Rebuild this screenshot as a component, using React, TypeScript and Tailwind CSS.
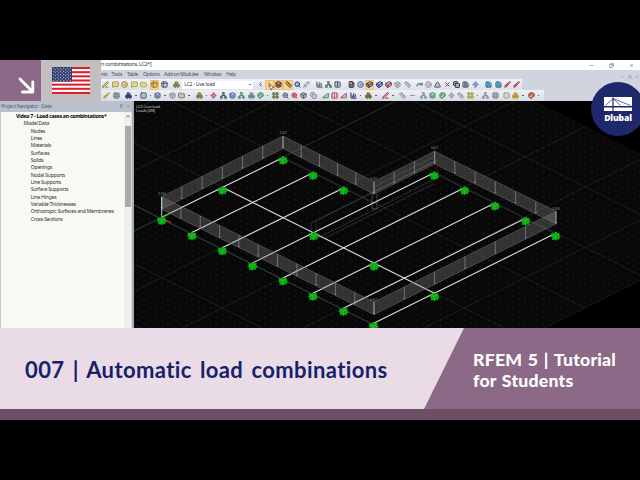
import {
  Box, Boxes, Brush, ChartColumn, ChevronLeft, ChevronRight, CircleDot, Columns2, Copy,
  Cuboid, FileSpreadsheet, Folder, FlipHorizontal, Grid3x3, Layers, LayoutGrid, type LucideIcon,
  MessageSquare, Minus, MousePointer2, Network, Palette, PenLine, Pin, Redo, Ruler, Save, Search,
  Square, Table2, Triangle, TriangleRight, Unplug, X, Zap, ZoomIn, ZoomOut,
} from "lucide-react";

type Tool = { icon: LucideIcon; color: string; on?: boolean; drop?: boolean };
type Group = { gap: string; tools: Tool[] };

const NAVY = "#303a70";
const GRAY = "#8e93a0";
const SLATE = "#555d72";
const GOLD = "#b89a20";
const GREEN = "#3f9668";
const RED = "#bd3440";
const BLUE = "#2874a8";
const BLACK = "#30313c";

const t = (icon: LucideIcon, color: string, extra: Partial<Tool> = {}): Tool => ({ icon, color, ...extra });

const mainStart: Group[] = [
  { gap: "ml-[0.3px]", tools: [t(PenLine, "#888b20"), t(MessageSquare, GOLD), t(CircleDot, "#b4842c"), t(MessageSquare, "#b6a521"), t(Folder, "#c2aa28")] },
  { gap: "ml-[2px]", tools: [t(Table2, "#a77b32", { on: true }), t(Table2, SLATE)] },
  { gap: "ml-[3.3px]", tools: [t(Boxes, "#77833c")] },
];

const mainRest: Group[] = [
  { gap: "ml-[2px]", tools: [t(ChevronLeft, "#4569b0"), t(ChevronRight, "#936c26", { on: true }), t(Layers, BLACK, { on: true }), t(Ruler, "#755522", { on: true }), t(Search, NAVY), t(Unplug, GRAY)] },
  { gap: "ml-[3px]", tools: [t(ChartColumn, SLATE), t(Network, "#477560"), t(Columns2, SLATE)] },
  { gap: "ml-[4px]", tools: [t(FileSpreadsheet, BLACK), t(CircleDot, "#5060b2"), t(Cuboid, NAVY, { on: true }), t(Cuboid, NAVY), t(Cuboid, "#823c5a"), t(Box, GRAY), t(Ruler, GRAY)] },
  { gap: "ml-[2.5px]", tools: [t(Redo, SLATE), t(CircleDot, GRAY), t(Triangle, SLATE), t(X, "#a42532"), t(Copy, BLACK), t(Save, SLATE), t(Zap, "#5270a5")] },
  { gap: "ml-[4.5px]", tools: [t(Save, BLUE), t(Save, BLUE), t(Brush, RED), t(Brush, RED)] },
];

const editGroups: Group[] = [
  { gap: "ml-[1.3px]", tools: [t(Brush, GOLD), t(Grid3x3, "#788b83")] },
  { gap: "ml-[3px]", tools: [t(Boxes, NAVY, { drop: true }), t(Square, SLATE, { drop: true }), t(Layers, "#4b6191", { drop: true }), t(Box, GRAY), t(Folder, "#6e7d68", { drop: true })] },
  { gap: "ml-[3px]", tools: [t(Boxes, "#78803b", { drop: true }), t(Zap, RED), t(Network, SLATE), t(Layers, "#5060a2"), t(Network, GREEN), t(Boxes, "#6d8396"), t(Palette, GREEN, { drop: true })] },
  { gap: "ml-[1px]", tools: [t(LayoutGrid, "#55672d"), t(ZoomOut, SLATE), t(ZoomIn, RED), t(Box, SLATE), t(Copy, GRAY)] },
  { gap: "ml-[2.5px]", tools: [t(TriangleRight, GREEN), t(FlipHorizontal, RED), t(TriangleRight, "#9a5d5d"), t(ChartColumn, NAVY, { drop: true })] },
  { gap: "ml-[1px]", tools: [t(Boxes, "#686b24", { drop: true })] },
  { gap: "ml-[2.5px]", tools: [t(PenLine, RED, { drop: true })] },
  { gap: "ml-[2.5px]", tools: [t(Ruler, GRAY), t(Minus, GRAY)] },
  { gap: "ml-[2px]", tools: [t(Network, GRAY), t(Layers, GREEN), t(Palette, GREEN), t(Zap, "#83939d"), t(Ruler, GRAY), t(LayoutGrid, "#9c982b", { drop: true })] },
  { gap: "ml-[1px]", tools: [t(Network, GRAY), t(Grid3x3, GRAY)] },
  { gap: "ml-[2px]", tools: [t(Square, "#a0a38e"), t(Boxes, GOLD, { drop: true })] },
  { gap: "ml-[1px]", tools: [t(Palette, "#a54028", { drop: true })] },
];

function ToolGroups({ groups }: { groups: Group[] }) {
  return groups.map((group, i) => (
    <div key={i} className={`flex items-center ${group.gap}`}>
      {group.tools.map(({ icon: Icon, color, on, drop }, j) => (
        <div key={j} className="flex items-center">
          <span
            className={`flex h-[10px] w-[9.35px] items-center justify-center ${on ? "border border-[#e9c078] bg-[#fbd591]" : ""}`}
          >
            <Icon size={7} strokeWidth={3.4} color={color} fill={color} fillOpacity={0.3} className="shrink-0" />
          </span>
          {drop && (
            <span className="flex w-[5.2px] justify-center">
              <span className="h-[1.5px] w-[1.5px] bg-[#555b6b]" />
            </span>
          )}
        </div>
      ))}
    </div>
  ));
}

function Flag() {
  return (
    <svg viewBox="0 0 38 26" className="h-[27px] w-[38px]" preserveAspectRatio="none">
      <rect width="38" height="26" fill="#fff" />
      {[0, 4, 8, 12, 16, 20, 24].map((y) => (
        <rect key={y} y={y} width="38" height="2" fill="#d8222f" />
      ))}
      <rect width="20" height="14" fill="#34406f" />
      {Array.from({ length: 9 }, (_, row) =>
        Array.from({ length: row % 2 ? 5 : 6 }, (_, col) => (
          <circle key={`${row}-${col}`} cx={1.8 + col * 3.3 + (row % 2 ? 1.65 : 0)} cy={1.3 + row * 1.42} r="0.5" fill="#dde2f2" />
        )),
      )}
    </svg>
  );
}

function Branding() {
  return (
    <div className="flex h-[41px] w-[101px] shrink-0">
      <div className="flex w-[41px] items-end justify-end bg-[#8c6a87] pr-[6.5px] pb-[7px]">
        <svg viewBox="0 0 17 17" className="h-[17px] w-[17px]" fill="none" stroke="#fff" strokeWidth="2.8" strokeLinecap="round" strokeLinejoin="round">
          <path d="M2 2 14.4 14.4M14.8 5V15H4.5" />
        </svg>
      </div>
      <div className="flex w-[60px] items-start bg-[#c1bfc0] pt-[7px] pl-[11px]">
        <Flag />
      </div>
    </div>
  );
}

function WindowBars() {
  return (
    <div className="flex min-w-0 flex-1 flex-col bg-[#d0d4df]">
      <div className="flex h-[10px] items-center justify-between bg-white">
        <span className="text-[5.3px] leading-none tracking-[-0.3px] whitespace-pre text-[#333]">n combintations, LC2*]</span>
        <div className="flex items-center gap-[15px] pr-[6px] text-[#333]">
          <Minus size={5} />
          <Copy size={5} className="-scale-x-100" />
          <X size={5} />
        </div>
      </div>
      <div className="flex h-[9px] items-center text-[5px] leading-none tracking-[-0.3px] whitespace-nowrap text-[#4c505b]">
        <span className="w-[10.5px]">nts</span>
        <span className="w-[15.5px]">Tools</span>
        <span className="w-[16px]">Table</span>
        <span className="w-[21px]">Options</span>
        <span className="w-[40px]">Add-on Modules</span>
        <span className="w-[22px]">Window</span>
        <span>Help</span>
        <div className="ml-auto flex gap-[3px] self-end pr-px text-[#7c8190]">
          <Minus size={4} />
          <Copy size={4} />
          <X size={4} />
        </div>
      </div>
      <div className="flex h-[11px] w-[421px] items-center bg-linear-to-b from-[#f1f3f7] to-[#dce0e9]">
        <ToolGroups groups={mainStart} />
        <div className="ml-px flex h-[8px] w-[71px] items-center justify-between bg-white px-[2px] text-[5px] leading-none tracking-[-0.2px] text-[#333]">
          <span>LC2 - Live load</span>
          <span className="h-[1.5px] w-[2px] bg-[#777]" />
        </div>
        <ToolGroups groups={mainRest} />
      </div>
      <div className="flex h-[11px] w-[443px] items-center bg-linear-to-b from-[#eef0f5] to-[#d8dce6]">
        <ToolGroups groups={editGroups} />
      </div>
    </div>
  );
}

const modelData = [
  "Nodes", "Lines", "Materials", "Surfaces", "Solids", "Openings", "Nodal Supports", "Line Supports",
  "Surface Supports", "Line Hinges", "Variable Thicknesses", "Orthotropic Surfaces and Membranes", "Cross-Sections",
];

function Navigator() {
  return (
    <div className="flex w-[134px] shrink-0 flex-col border-r-2 border-[#a9acb7] bg-[#d9dce3]">
      <div className="flex h-[11px] shrink-0 items-center justify-between bg-[#bac0cc] pr-[2px] pl-px text-[5.2px] leading-none tracking-[-0.32px] text-[#596170]">
        <span>Project Navigator - Data</span>
        <span className="flex gap-[2px]">
          <Pin size={4.5} />
          <X size={4.5} />
        </span>
      </div>
      <div className="mr-px flex min-h-0 flex-1 border-l border-[#c9c9cc] bg-[#f8f8f4]">
        <div className="flex-1 pt-px text-[5.2px] leading-[7.33px] tracking-[-0.26px] whitespace-nowrap text-[#303030]">
          <div className="pl-[15px] font-bold tracking-[-0.27px] text-black">Video 7 - Load cases an combintations*</div>
          <div className="pl-[22.5px]">Model Data</div>
          {modelData.map((name) => (
            <div key={name} className="pl-[29.7px]">{name}</div>
          ))}
        </div>
        <div className="flex w-[7px] shrink-0 flex-col items-center bg-[#efefee]">
          <span className="h-[9px] pt-[3px] text-[#666]">
            <svg viewBox="0 0 4 3" className="h-[3px] w-[4px]" fill="none" stroke="currentColor"><path d="m0 2.5 2-2 2 2" /></svg>
          </span>
          <span className="mt-[5px] h-[81px] w-[6px] bg-[#aaaaab]" />
        </div>
      </div>
    </div>
  );
}

type Pt = [number, number];

const supports: Pt[] = [
  [161.7, 220.5], [192, 235.7], [222.3, 250.8], [252.5, 266], [283, 281], [313, 296.3], [343.5, 311.3], [373.5, 326],
  [222.3, 190.4], [283, 160.3], [313, 175.5], [343.5, 190.5], [313.5, 236], [434.2, 175.6], [464.5, 190.5],
  [495, 206], [525.5, 221], [555.6, 236], [374, 266.3], [434.5, 296.5],
];

const beams: [Pt, Pt][] = [
  [[161.7, 217.3], [283, 157.5]],
  [[192, 232.5], [313, 172.7]],
  [[222.3, 247.7], [343.5, 188]],
  [[252.5, 263], [434.2, 172.7]],
  [[283, 278], [464.5, 187.7]],
  [[313, 293.2], [495, 203]],
  [[343.5, 308.3], [525.5, 218.2]],
  [[373.7, 323.3], [555.6, 233.3]],
  [[222.3, 187.3], [434.5, 293.3]],
];

// top edges of the load bands, with the number of arrow segments
const bands: [Pt, Pt, number][] = [
  [[161.7, 196.7], [283, 136], 6],
  [[283, 136], [374, 181.5], 5],
  [[374, 181.5], [434.6, 151.3], 3],
  [[434.6, 151.3], [556, 211.3], 6],
  [[161.7, 196.7], [374, 302], 11],
  [[374, 302], [556, 211.3], 6],
];

const gridSteps = [-5, -4, -3, -2, -1, 1, 2, 3, 4, 5];

function Viewport() {
  return (
    <div className="min-w-0 flex-1 overflow-hidden bg-black">
      <svg viewBox="134 101 506 227" className="block h-[227px] w-[506px]">
        <defs>
          <pattern id="dots" x="161.7" y="217.3" width="12.1" height="6.05" patternUnits="userSpaceOnUse">
            <rect x="0" y="0" width="0.8" height="0.8" fill="#383838" />
            <rect x="6.05" y="3.02" width="0.8" height="0.8" fill="#383838" />
          </pattern>
          <clipPath id="plane">
            <path d="M134 101H534L640 154V281L546 328H134Z" />
          </clipPath>
        </defs>
        <g clipPath="url(#plane)">
          <rect x="134" y="101" width="506" height="227" fill="#080808" />
          <rect x="134" y="101" width="506" height="227" fill="url(#dots)" />
          <g stroke="#262929" strokeWidth="0.6">
            {gridSteps.map((n) => (
              <g key={n}>
                <line x1="134" y1={231 + n * 60.5} x2="640" y2={-22 + n * 60.5} />
                <line x1="134" y1={203.3 + n * 60.5} x2="640" y2={456.3 + n * 60.5} />
              </g>
            ))}
          </g>
          <g strokeWidth="0.7" fill="none">
            <path d="M134 231 161.7 217.3" stroke="#226261" />
            <path d="M283 157 396 101" stroke="#25403d" />
            <path d="M134 205 161.7 219 374 325" stroke="#39696b" />
          </g>
        </g>
        <g fill="none" stroke="#484848" strokeWidth="0.6">
          <path d="M283 158 374 203.5M434 173 556 234" />
          <path d="M311 235V223L434 162M316 235V221L437 160M316 239 437 178V167M325 238 434 183.5M374 187 434 157" />
          <path d="M372 194V209H377V194" stroke="#707070" />
        </g>
        <g stroke="#dcdcdc" strokeWidth="1.1">
          {beams.map(([a, b], i) => (
            <line key={i} x1={a[0]} y1={a[1]} x2={b[0]} y2={b[1]} />
          ))}
        </g>
        {bands.map(([a, b, n], i) => (
          <g key={i}>
            <path
              d={`M${a[0]} ${a[1]}L${b[0]} ${b[1]}v12.6L${a[0]} ${a[1] + 12.6}Z`}
              fill="#8c8c8c"
              fillOpacity="0.32"
              stroke="#686868"
              strokeWidth="0.6"
            />
            {Array.from({ length: n + 1 }, (_, k) => {
              const x = a[0] + ((b[0] - a[0]) * k) / n;
              const y = a[1] + ((b[1] - a[1]) * k) / n;
              return (
                <g key={k} fill="none" stroke="#999" strokeWidth="0.6">
                  <path d={`M${x} ${y}v12`} />
                  <path d={`M${x - 0.7} ${y + 11}l.7 1 .7-1`} />
                </g>
              );
            })}
          </g>
        ))}
        <path d="M161.7 197V218" stroke="#a9e0e2" strokeWidth="0.9" />
        <path d="M163 217 171 213" stroke="#26c52c" strokeWidth="1" />
        <path d="M164 219.5 171 222.5" stroke="#df2020" strokeWidth="1.1" />
        {supports.map(([x, y]) => (
          <g key={`${x}-${y}`} transform={`translate(${x} ${y})`}>
            <path d="M-4.8-2.8-2-2.6 0-4.2 2.2-2.7 4-3.3 3.9-.8 5.2 .9 3.6 2.2 3.4 4 1.6 3.2-.2 4.7-1.4 3.4-3.6 4.2-3.4 1.6-5 .3-3.8-1Z" fill="#0ba814" />
            <path d="m-3.4-1.8 3.2 1.6 3.2-1.6M-.2 0V3.6" stroke="#1fcb28" strokeWidth="0.9" fill="none" />
            <rect x="0" y="-4" width="1" height="1" fill="#d66a54" />
          </g>
        ))}
        <g className="font-['Noto_Sans']" fontSize="2.9" fill="#999" textAnchor="middle">
          <text x="162" y="195">0.500</text>
          <text x="283.5" y="134">0.621</text>
          <text x="374" y="180">0.621</text>
          <text x="434.6" y="149">0.621</text>
          <text x="556" y="210">0.500</text>
          <text x="374" y="301">0.621</text>
        </g>
        <g className="font-['Noto_Sans']" fontSize="4.2" fill="#c8c8c8" letterSpacing="-0.2">
          <text x="136" y="107.5">LC2: Live load</text>
          <text x="136" y="112.4">Loads [kN]</text>
        </g>
      </svg>
    </div>
  );
}

function DlubalBadge() {
  return (
    <div className="absolute top-[82px] left-[591px] flex h-[54px] w-[54px] flex-col items-center bg-[#20286c] pt-[15px] [border-radius:50%]">
      <svg viewBox="0 0 28 14" className="h-[14px] w-[28px]">
        <path d="M0 0H28V9H0ZM0 10.5H28V14H0Z" fill="#fff" />
        <path d="M9 .5V14" stroke="#20286c" strokeWidth="1.2" />
        <path d="M1.5 8.5 9 1.5 16.5 8.5M9 1.5 26.5 8.5" stroke="#20286c" strokeWidth="0.7" fill="none" />
      </svg>
      <span className="mt-[1.5px] font-['Open_Sans'] text-[8.6px] leading-[10px] font-extrabold tracking-[-0.15px] text-white">Dlubal</span>
    </div>
  );
}

function Banner() {
  return (
    <div className="flex h-[92px] shrink-0 flex-col">
      <div className="flex h-[81px] bg-[#8c6a87] font-['Lato',sans-serif]">
        <div className="flex w-[464px] items-center bg-[#e9dce6] pt-[2px] pl-[25px] [clip-path:polygon(0_0,100%_0,424px_100%,0_100%)]">
          <span className="text-[22px] leading-none font-bold tracking-[0.4px] [word-spacing:2.4px] whitespace-nowrap text-[#17206a]">
            007 | Automatic load combinations
          </span>
        </div>
        <div className="pt-[20.5px] pl-[9px] text-[17.6px] leading-[21px] font-black tracking-[0.25px] [word-spacing:1.1px] whitespace-nowrap text-white">
          <div>RFEM 5 | Tutorial</div>
          <div>for Students</div>
        </div>
      </div>
      <div className="h-[11px] bg-[#6c4e65]" />
    </div>
  );
}

export default function App() {
  return (
    <div className="relative flex h-[480px] w-[640px] flex-col overflow-hidden bg-black pt-[60px] font-['Noto_Sans',sans-serif]">
      <div className="flex h-[41px] shrink-0">
        <Branding />
        <WindowBars />
      </div>
      <div className="flex h-[227px] shrink-0">
        <Navigator />
        <Viewport />
      </div>
      <Banner />
      <DlubalBadge />
      <MousePointer2 size={7} fill="#fff" color="#333" strokeWidth={2} className="absolute top-[84px] left-[268px]" />
    </div>
  );
}
